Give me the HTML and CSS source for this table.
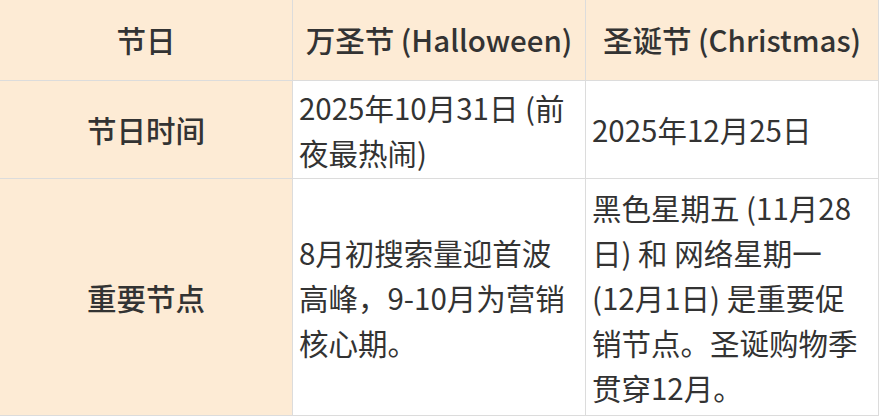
FILE: index.html
```html
<!DOCTYPE html>
<html lang="zh-CN">
<head>
<meta charset="utf-8">
<title>节日对比</title>
<link rel="stylesheet" href="styles.css">
</head>
<body>
<table class="fest">
  <colgroup>
    <col class="c1"><col class="c2"><col class="c3">
  </colgroup>
  <thead>
    <tr class="r-head">
      <th>节日</th>
      <th>万圣节 (Halloween)</th>
      <th>圣诞节 (Christmas)</th>
    </tr>
  </thead>
  <tbody>
    <tr class="r-time">
      <th class="label">节日时间</th>
      <td>2025年10月31日 (前夜最热闹)</td>
      <td>2025年12月25日</td>
    </tr>
    <tr class="r-key">
      <th class="label">重要节点</th>
      <td>8月初搜索量迎首波高峰，9-10月为营销核心期。</td>
      <td>黑色星期五 (11月28日) 和 网络星期一 (12月1日) 是重要促销节点。圣诞购物季贯穿12月。</td>
    </tr>
  </tbody>
</table>
</body>
</html>
```
FILE: styles.css
```css
html, body {
  margin: 0;
  padding: 0;
  background: #ffffff;
}
body {
  font-family: "Noto Sans CJK SC", "Noto Sans", sans-serif;
  color: #333333;
  overflow: hidden;
}
.fest {
  border-collapse: collapse;
  table-layout: fixed;
  width: 879px;
  margin-top: -3px;
  margin-left: -1px;
  font-size: 29.5px;
  line-height: 45px;
}
.c1 { width: 293px; }
.c2 { width: 293px; }
.c3 { width: 293px; }
.fest th,
.fest td {
  border: 1px solid #dcdcdc;
  padding: 3px 12px 3px 6px;
  vertical-align: middle;
}
.fest th {
  background: #fdebd5;
  font-weight: 500;
  text-align: center;
  padding-left: 6px;
  padding-right: 6px;
}
.fest td {
  background: #ffffff;
  font-weight: 400;
  text-align: left;
}
.r-head th { height: 82px; padding-top: 0; padding-bottom: 0; }
.r-time th, .r-time td { height: 91px; }
.r-key th, .r-key td { height: 230px; }
```
